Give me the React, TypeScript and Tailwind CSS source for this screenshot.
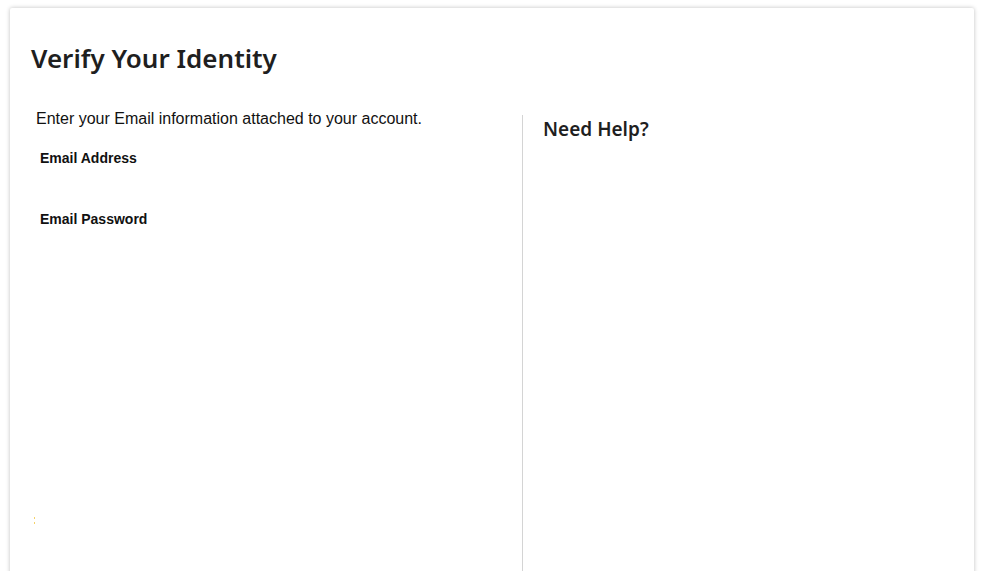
export default function App() {
  return (
    <div className="w-[984px] h-[571px] overflow-hidden bg-white pt-[8px] pl-[10px] pr-[10px]">
      <div className="w-[964px] h-[600px] bg-white shadow-[0_0_4px_rgba(0,0,0,0.25)] rounded-[2px]">
        <h1 className="pl-[21px] pt-[30px] text-[26px] leading-[40px] font-semibold text-[#1f1f1f]" style={{ fontFamily: '"Noto Sans", sans-serif' }}>
          Verify Your Identity
        </h1>
        <div className="flex mt-[31px]">
          <div className="w-[512px] pl-[26px]" style={{ fontFamily: '"Liberation Sans", Arial, sans-serif' }}>
            <p className="text-[16px] leading-[20px] text-[#111]">Enter your Email information attached to your account.</p>
            <div className="pl-[4px] mt-[20px] text-[14px] leading-[18px] font-bold text-[#111]">Email Address</div>
            <div className="pl-[4px] mt-[43px] text-[14px] leading-[18px] font-bold text-[#111]">Email Password</div>
            <div className="mt-[289px] ml-[-2px] w-[2px] flex flex-col gap-[3px]">
              <span className="block w-[1px] h-[2px] bg-[#f5d26a]"></span>
              <span className="block w-[1px] h-[2px] bg-[#f5d26a]"></span>
            </div>
          </div>
          <div className="flex-1 border-l border-[#d4d4d4] mt-[6px] pl-[20px] h-[500px]">
            <h2 className="text-[19px] leading-[28px] font-semibold text-[#1f1f1f]" style={{ fontFamily: '"Noto Sans", sans-serif' }}>Need Help?</h2>
          </div>
        </div>
      </div>
    </div>
  );
}
